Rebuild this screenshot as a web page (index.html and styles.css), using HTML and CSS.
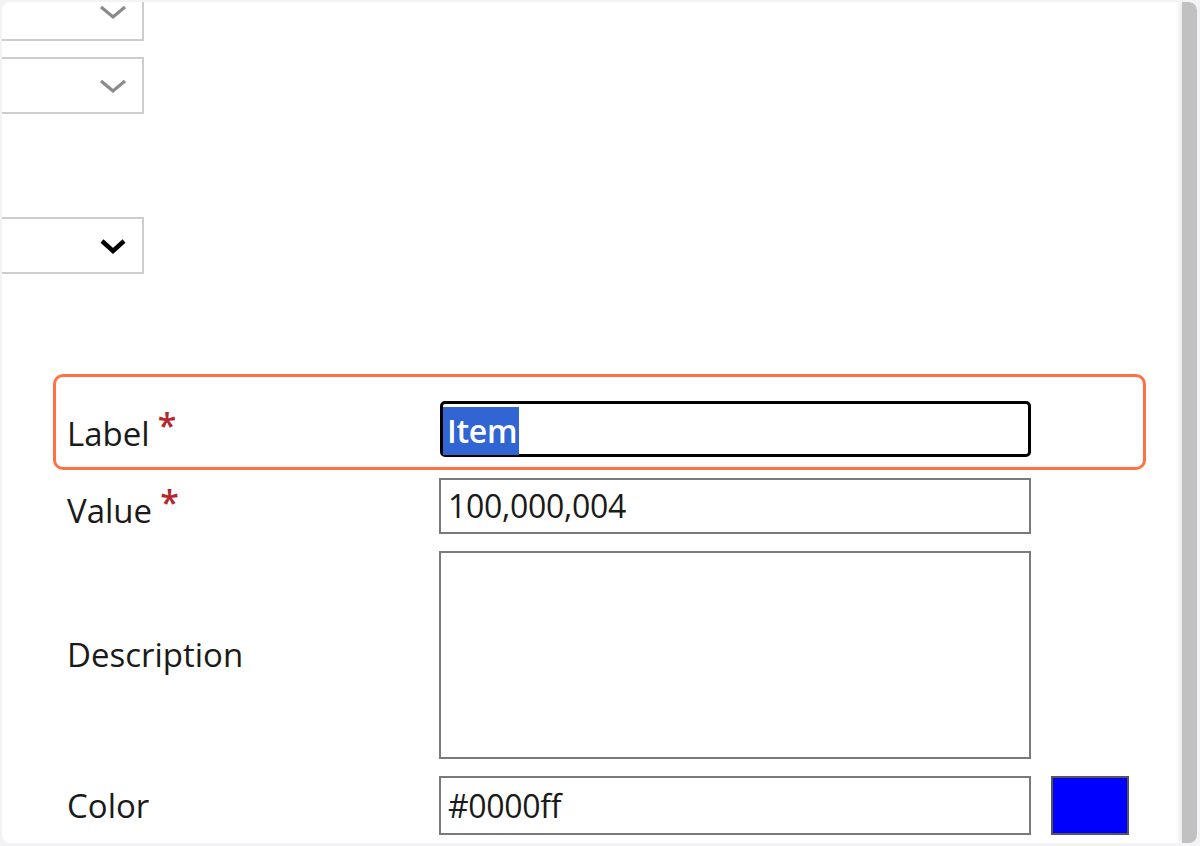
FILE: index.html
```html
<!DOCTYPE html>
<html lang="en">
<head>
<meta charset="utf-8">
<title>Option editor</title>
<link rel="stylesheet" href="styles.css">
</head>
<body>
<div class="frame">
  <div class="content">
    <div class="dropdown dd-first">
      <svg class="chev" viewBox="0 0 28 16" width="28" height="16"><polyline points="2,3 14,13 26,3" fill="none" stroke="#8a8a8a" stroke-width="3.2"/></svg>
    </div>
    <div class="dropdown dd-second">
      <svg class="chev" viewBox="0 0 28 16" width="28" height="16"><polyline points="2,3 14,13 26,3" fill="none" stroke="#8a8a8a" stroke-width="3.2"/></svg>
    </div>
    <div class="dropdown dd-third">
      <svg class="chev" viewBox="0 0 28 18" width="28" height="18"><polyline points="3,4 14,14 25,4" fill="none" stroke="#000" stroke-width="4.4"/></svg>
    </div>

    <div class="form">
      <div class="row row-label">
        <div class="callout"></div>
        <div class="lbl">Label<span class="req">*</span></div>
        <div class="field focused"><span class="sel">Item</span></div>
      </div>
      <div class="row row-value">
        <div class="lbl">Value<span class="req">*</span></div>
        <div class="field">100,000,004</div>
      </div>
      <div class="row row-desc">
        <div class="lbl">Description</div>
        <div class="field area"></div>
      </div>
      <div class="row row-color">
        <div class="lbl">Color</div>
        <div class="field">#0000ff</div>
        <div class="swatch"></div>
      </div>
    </div>
  </div>
  <div class="scrollbar"></div>
</div>
</body>
</html>
```
FILE: styles.css
```css
html, body {
  margin: 0;
  padding: 0;
}
body {
  background: #f2f2f7;
  width: 1200px;
  height: 846px;
  overflow: hidden;
  font-family: "Open Sans", "Noto Sans", "Liberation Sans", sans-serif;
  color: #1a1a1a;
}
.frame {
  margin: 2px 0 0 2px;
  width: 1195px;
  height: 841px;
  background: #fff;
  border-radius: 8px;
  overflow: hidden;
  display: flex;
}
.content {
  flex: 1;
  position: relative;
}
.scrollbar {
  width: 15px;
  background: #c1c1c1;
  box-shadow: -3px 0 4px rgba(0, 0, 0, 0.08);
  border-top-right-radius: 8px;
}
.dropdown {
  width: 160px;
  height: 57px;
  box-sizing: border-box;
  margin-left: -18px;
  border: 2px solid #cdcdcd;
  display: flex;
  align-items: center;
  justify-content: flex-end;
  padding-right: 15px;
}
.dd-first {
  margin-top: -18px;
}
.dd-first .chev {
  margin-top: -2px;
}
.dd-second {
  margin-top: 16px;
}
.dd-third {
  margin-top: 103px;
}
.form {
  margin-top: 127px;
  display: flex;
  flex-direction: column;
}
.row {
  position: relative;
  display: flex;
  align-items: center;
  padding-left: 65px;
}
.lbl {
  width: 372px;
  font-size: 33px;
  line-height: 44px;
}
.req {
  color: #b4262c;
  font-size: 34px;
  font-weight: 600;
  vertical-align: 8px;
  margin-left: 8px;
}
.field {
  width: 592px;
  height: 56px;
  box-sizing: border-box;
  border: 2px solid #7a7a7a;
  font-size: 32px;
  line-height: 52px;
  padding-left: 7px;
  letter-spacing: -0.3px;
}
.row-label {
  height: 56px;
}
.row-label .field {
  width: 591px;
  margin-left: 1px;
  border: 3px solid #000;
  border-radius: 5px;
  padding: 1px 0 0 0;
}
.sel {
  display: inline-block;
  background: #3165d4;
  color: #fff;
  height: 48px;
  line-height: 48px;
  padding: 0 2px 0 4px;
  font-weight: 600;
}
.row-value {
  margin-top: 21px;
}
.row-desc {
  margin-top: 17px;
}
.area {
  height: 208px;
}
.row-color {
  margin-top: 17px;
}
.row-color .field {
  height: 59px;
  line-height: 55px;
}
.swatch {
  width: 78px;
  height: 59px;
  box-sizing: border-box;
  margin-left: 20px;
  background: #0000ff;
  border: 2px solid #555;
}
.callout {
  position: absolute;
  left: 51px;
  top: -27px;
  width: 1093px;
  height: 96px;
  box-sizing: border-box;
  border: 3px solid #ff7145;
  border-radius: 10px;
}
```
